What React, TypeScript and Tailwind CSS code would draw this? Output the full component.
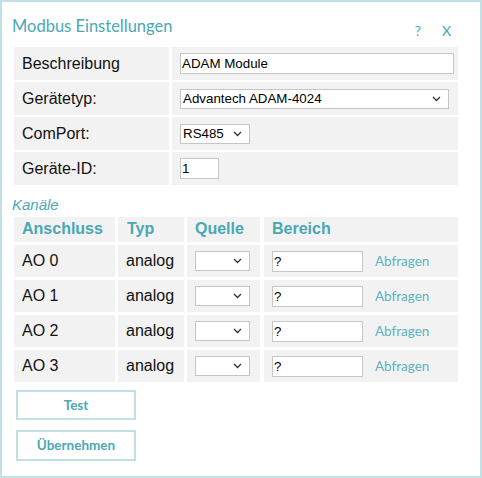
import React from "react";

const teal = "text-[#4aa8b5]";

function Chevron() {
  return (
    <svg width="9" height="6" viewBox="0 0 9 6" className="absolute right-[7px] top-1/2 -translate-y-1/2 pointer-events-none">
      <path d="M1 1l3.5 3.5L8 1" fill="none" stroke="#333" strokeWidth="1.3" />
    </svg>
  );
}

function Select({ value, className }: { value: string; className: string }) {
  return (
    <div className={`relative h-[20px] border border-[#c6c6c6] bg-white ${className}`}>
      <div className="pl-[2px] leading-[18px] text-[13.33px] text-black">{value}</div>
      <Chevron />
    </div>
  );
}

function TextBox({ value, className }: { value: string; className: string }) {
  return (
    <div className={`h-[21px] border border-[#c6c6c6] bg-white pl-[1px] leading-[19px] text-[13.33px] text-black ${className}`}>
      {value}
    </div>
  );
}

function SettingRow({ label, children }: { label: string; children: React.ReactNode }) {
  return (
    <div className="flex h-[33px] gap-[3px]">
      <div className="flex w-[155px] items-center bg-[#f2f2f2] pl-[8px] text-[16px] text-[#111]">{label}</div>
      <div className="flex flex-1 items-center bg-[#f2f2f2] pl-[8px]">{children}</div>
    </div>
  );
}

const channels = ["AO 0", "AO 1", "AO 2", "AO 3"];

export default function App() {
  return (
    <div
      className="h-[478px] w-[482px] border-2 border-[#c2dfe2] bg-white"
      style={{ fontFamily: '"Liberation Sans", Arial, sans-serif' }}
    >
      <div className="flex h-[45px] items-start pl-[10px] pt-[13px]">
        <div className={`text-[16.5px] leading-[22px] ${teal}`} style={{ fontFamily: "Lato, sans-serif" }}>
          Modbus Einstellungen
        </div>
        <div className={`ml-auto flex gap-[21px] pr-[29px] pt-[5px] text-[14px] ${teal}`} style={{ fontFamily: "Lato, sans-serif" }}>
          <span>?</span>
          <span>X</span>
        </div>
      </div>

      <div className="ml-[12px] flex w-[444px] flex-col gap-[2px]">
        <SettingRow label="Beschreibung">
          <TextBox value="ADAM Module" className="w-[274px]" />
        </SettingRow>
        <SettingRow label="Gerätetyp:">
          <Select value="Advantech ADAM-4024" className="w-[269px]" />
        </SettingRow>
        <SettingRow label="ComPort:">
          <Select value="RS485" className="w-[70px]" />
        </SettingRow>
        <SettingRow label="Geräte-ID:">
          <TextBox value="1" className="w-[39px]" />
        </SettingRow>
      </div>

      <div className={`ml-[10px] mt-[10px] h-[22px] text-[15px] italic leading-[20px] ${teal}`}>Kanäle</div>

      <div className="ml-[12px] flex w-[444px] flex-col gap-[3px]">
        <div className={`flex h-[25px] gap-[3px] text-[16px] font-bold ${teal}`}>
          <div className="w-[101px] bg-[#f2f2f2] pl-[8px] leading-[24px]">Anschluss</div>
          <div className="w-[66px] bg-[#f2f2f2] pl-[9px] leading-[24px]">Typ</div>
          <div className="w-[73px] bg-[#f2f2f2] pl-[8px] leading-[24px]">Quelle</div>
          <div className="ml-[1px] flex-1 bg-[#f2f2f2] pl-[8px] leading-[24px]">Bereich</div>
        </div>
        {channels.map((c) => (
          <div key={c} className="flex h-[32px] gap-[3px] text-[16px] text-[#111]">
            <div className="flex w-[101px] items-center bg-[#f2f2f2] pl-[8px]">{c}</div>
            <div className="flex w-[66px] items-center bg-[#f2f2f2] pl-[8px]">analog</div>
            <div className="flex w-[73px] items-center bg-[#f2f2f2] pl-[8px]">
              <Select value="" className="w-[55px]" />
            </div>
            <div className="ml-[1px] flex flex-1 items-center bg-[#f2f2f2] pl-[8px]">
              <TextBox value="?" className="w-[91px]" />
              <span className="ml-[12px] text-[13.5px] text-[#5cb3c1]" style={{ fontFamily: "Lato, sans-serif" }}>
                Abfragen
              </span>
            </div>
          </div>
        ))}
      </div>

      <div className="ml-[14px] mt-[8px] flex flex-col gap-[10px]" style={{ fontFamily: "Lato, sans-serif" }}>
        <button className={`h-[30px] w-[120px] border-2 border-[#c2dfe2] bg-white text-[13.5px] font-bold ${teal}`}>
          Test
        </button>
        <button className={`h-[31px] w-[120px] border-2 border-[#c2dfe2] bg-white text-[13.5px] font-bold ${teal}`}>
          Übernehmen
        </button>
      </div>
    </div>
  );
}
